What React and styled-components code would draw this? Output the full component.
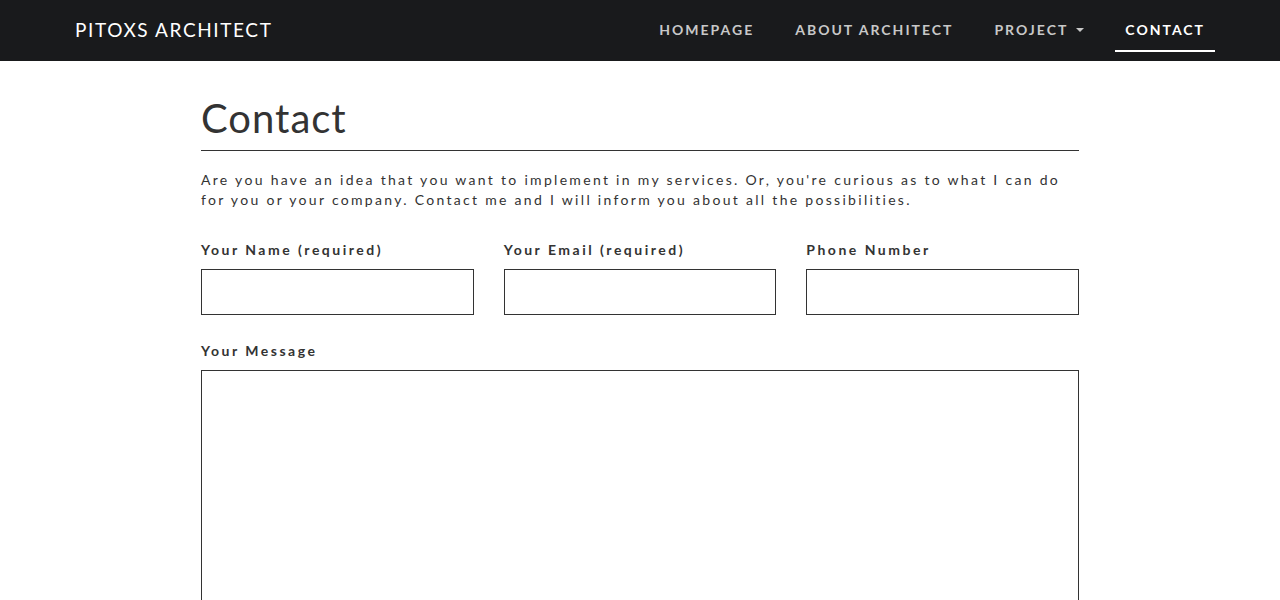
import React from "react";
import styled, { createGlobalStyle } from "styled-components";

const GlobalStyle = createGlobalStyle`
  body {
    margin: 0;
    background: #fff;
    font-family: "Lato", "Noto Sans", sans-serif;
    color: #333;
  }
`;

const Navbar = styled.nav`
  height: 61px;
  background-color: #191a1c;
  display: flex;
  align-items: center;
  justify-content: space-between;
  padding: 0 65px 0 75px;
`;

const Brand = styled.a`
  color: #fff;
  font-family: "Lato", sans-serif;
  font-size: 19px;
  letter-spacing: 1.6px;
  text-decoration: none;
  margin-top: -2px;
`;

const NavList = styled.ul`
  display: flex;
  align-items: stretch;
  height: 100%;
  margin: 0;
  padding: 0;
  list-style: none;
  gap: 21px;
`;

const NavItem = styled.li`
  display: flex;
  align-items: center;
  padding: 0 10px 2px;
  font-size: 14px;
  font-weight: 700;
  letter-spacing: 2px;
  color: ${({ $active }) => ($active ? "#fff" : "#c8c8c8")};
  position: relative;
  cursor: pointer;

  &::after {
    content: "";
    display: ${({ $active }) => ($active ? "block" : "none")};
    position: absolute;
    left: 0;
    right: 0;
    bottom: 9px;
    height: 2px;
    background: #fff;
  }
`;

const Caret = styled.span`
  display: inline-block;
  margin-left: 8px;
  border-top: 4px solid #c8c8c8;
  border-left: 4px solid transparent;
  border-right: 4px solid transparent;
  vertical-align: middle;
`;

const Main = styled.main`
  width: 878px;
  margin: 0 auto;
  padding-top: 33px;
`;

const Title = styled.h1`
  margin: 0;
  padding-bottom: 8px;
  border-bottom: 1px solid #333;
  font-family: "Lato", sans-serif;
  font-weight: 400;
  font-size: 40px;
  letter-spacing: 1px;
  color: #333;
`;

const Intro = styled.p`
  margin: 19px 0 0;
  font-size: 14px;
  line-height: 20px;
  letter-spacing: 2.3px;
  color: #333;
`;

const Form = styled.form`
  margin-top: 30px;
  display: flex;
  flex-direction: column;
  gap: 26px;
`;

const Row = styled.div`
  display: grid;
  grid-template-columns: repeat(3, 1fr);
  gap: 30px;
`;

const Field = styled.label`
  display: flex;
  flex-direction: column;
  gap: 9px;
`;

const Label = styled.span`
  font-size: 14px;
  font-weight: 700;
  letter-spacing: 2.5px;
  line-height: 20px;
  color: #333;
`;

const Input = styled.input`
  box-sizing: border-box;
  height: 46px;
  width: 100%;
  border: 1px solid #333;
  background: #fff;
  padding: 0 10px;
  outline: none;
`;

const TextArea = styled.textarea`
  box-sizing: border-box;
  height: 260px;
  width: 100%;
  border: 1px solid #333;
  background: #fff;
  resize: none;
  outline: none;
`;

export default function App() {
  const items = ["HOMEPAGE", "ABOUT ARCHITECT", "PROJECT", "CONTACT"];
  return (
    <>
      <GlobalStyle />
      <Navbar>
        <Brand href="#">PITOXS ARCHITECT</Brand>
        <NavList>
          {items.map((item) => (
            <NavItem key={item} $active={item === "CONTACT"}>
              {item}
              {item === "PROJECT" && <Caret />}
            </NavItem>
          ))}
        </NavList>
      </Navbar>
      <Main>
        <Title>Contact</Title>
        <Intro>
          Are you have an idea that you want to implement in my services. Or,
          you're curious as to what I can do for you or your company. Contact me
          and I will inform you about all the possibilities.
        </Intro>
        <Form>
          <Row>
            <Field>
              <Label>Your Name (required)</Label>
              <Input type="text" />
            </Field>
            <Field>
              <Label>Your Email (required)</Label>
              <Input type="email" />
            </Field>
            <Field>
              <Label>Phone Number</Label>
              <Input type="tel" />
            </Field>
          </Row>
          <Field>
            <Label>Your Message</Label>
            <TextArea />
          </Field>
        </Form>
      </Main>
    </>
  );
}
